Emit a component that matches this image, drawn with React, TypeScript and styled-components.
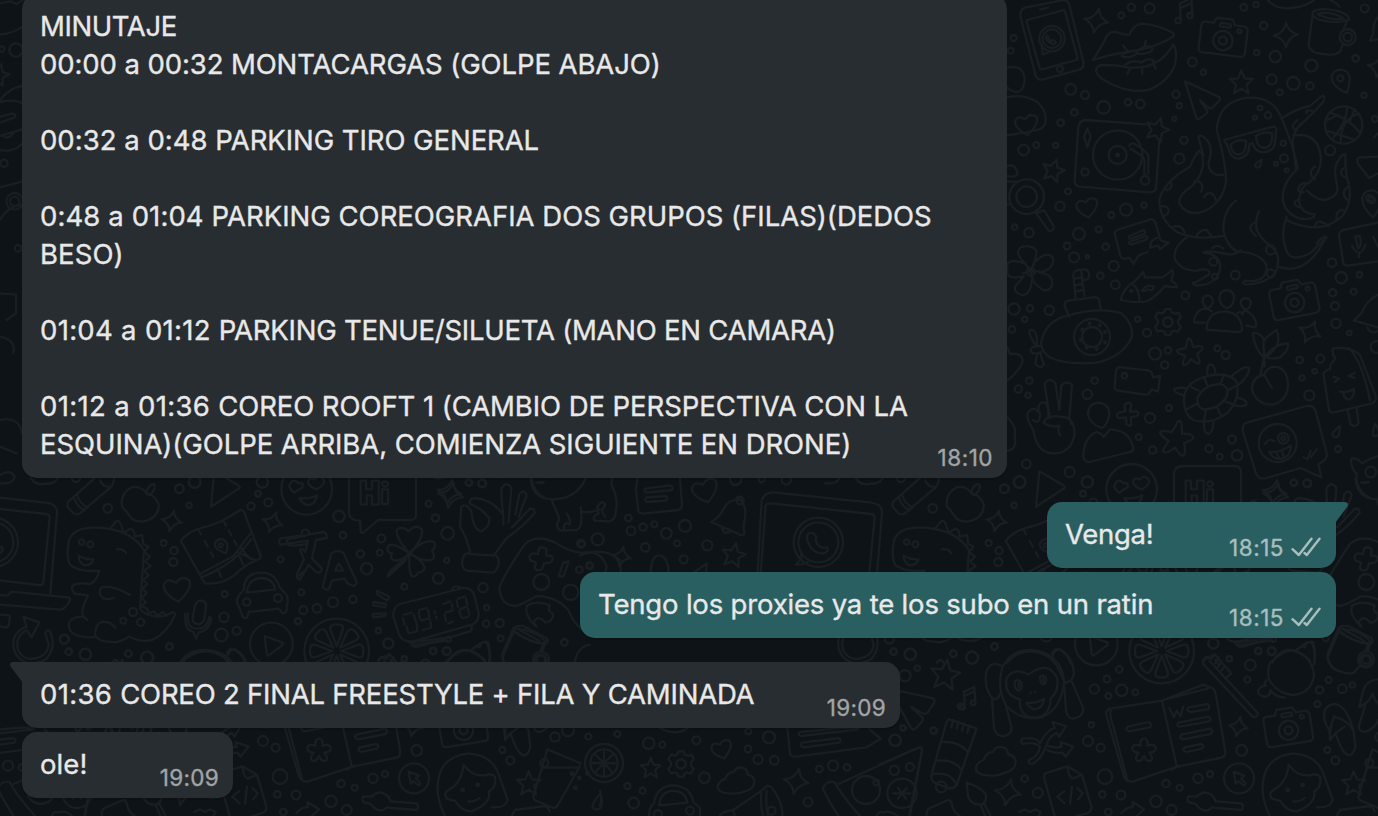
import styled, { createGlobalStyle, css } from 'styled-components'

type Run = { text: string, spacing?: number }
type Message = {
  id: number
  own?: boolean
  tail?: boolean
  width: number
  time: string
  timeSpacing: number
  lines: Run[][]
}

// Consecutive messages of the same author are grouped together
const groups: Message[][] = [
  [
    {
      id: 1,
      width: 985,
      time: '18:10',
      timeSpacing: 0.5,
      lines: [
        [{ text: 'MINUTAJE', spacing: -0.4 }],
        [{ text: '00:00 a 00:32 MONTACARGAS (GOLPE ABAJO)', spacing: -0.1 }],
        [],
        [{ text: '00:32 a 0:48 ', spacing: 0.02 }, { text: 'PARKING TIRO GENERAL', spacing: -0.07 }],
        [],
        [{ text: '0:48 a 01:04 ', spacing: 0.1 }, { text: 'PARKING COREOGRAFIA DOS GRUPOS (FILAS)(DEDOS', spacing: -0.01 }],
        [{ text: 'BESO)', spacing: 0.1 }],
        [],
        [{ text: '01:04 a 01:12 ', spacing: 0.3 }, { text: 'PARKING TENUE/SILUETA (MANO EN CAMARA)', spacing: -0.24 }],
        [],
        [{ text: '01:12 a 01:36 ', spacing: 0.33 }, { text: 'COREO ROOFT 1 (CAMBIO DE PERSPECTIVA CON LA', spacing: -0.07 }],
        [{ text: 'ESQUINA)(GOLPE ARRIBA, COMIENZA SIGUIENTE EN DRONE)', spacing: -0.06 }],
      ],
    },
  ],
  [
    { id: 2, own: true, tail: true, width: 289, time: '18:15', timeSpacing: 0.5, lines: [[{ text: 'Venga!', spacing: -0.3 }]] },
    { id: 3, own: true, width: 756, time: '18:15', timeSpacing: 0.5, lines: [[{ text: 'Tengo los proxies ya te los subo en un ratin', spacing: -0.18 }]] },
  ],
  [
    {
      id: 4,
      tail: true,
      width: 878,
      time: '19:09',
      timeSpacing: 0.3,
      lines: [[{ text: '01:36 ', spacing: 0.33 }, { text: 'COREO 2 FINAL FREESTYLE + FILA Y CAMINADA', spacing: -0.22 }]],
    },
    { id: 5, width: 211, time: '19:09', timeSpacing: 0.3, lines: [[{ text: 'ole!', spacing: 0.1 }]] },
  ],
]

const GlobalStyle = createGlobalStyle`
  body {
    margin: 0;
    background: #0e1317;
    font-family: Inter, "Open Sans", sans-serif;
  }
`

const Screen = styled.main`
  position: relative;
  width: 1378px;
  height: 816px;
  overflow: hidden;
  background: #0e1317;
`

const Wallpaper = styled.svg`
  position: absolute;
  inset: 0;
  fill: none;
  stroke: #191e22;
  stroke-width: 2.3px;
  stroke-linecap: round;
  stroke-linejoin: round;

  path, circle, ellipse {
    vector-effect: non-scaling-stroke;
  }
`

const Conversation = styled.div`
  position: relative;
  display: flex;
  flex-direction: column;
  gap: 24px;
  margin-top: -6px;
  padding: 0 42px 0 22px;
`

const Group = styled.section`
  display: flex;
  flex-direction: column;
  gap: 4px;
`

const Bubble = styled.div<{ $own?: boolean, $tail?: boolean, $width: number }>`
  position: relative;
  box-sizing: border-box;
  display: flex;
  align-items: flex-end;
  width: ${({ $width }) => $width}px;
  padding: 13px 14px 15px 18px;
  border-radius: 15px;
  background: #282d31;
  color: #e8e8e8;
  box-shadow: 0 2px 1px rgba(0, 0, 0, 0.14);

  ${({ $tail }) => $tail && css`border-top-left-radius: 0;`}

  ${({ $own, $tail }) => $own && css`
    align-self: flex-end;
    background: #2a5f61;
    border-radius: ${$tail ? '15px 0 15px 15px' : '15px'};
  `}
`

const Body = styled.div`
  flex: 1;
  min-width: 0;
`

const TextLine = styled.p`
  margin: 0;
  min-height: 38px;
  font-size: 27.5px;
  line-height: 38px;
  white-space: pre;
  -webkit-text-stroke: 0.35px currentColor;
`

const Spaced = styled.span<{ $spacing: number }>`
  letter-spacing: ${({ $spacing }) => $spacing}px;
`

const Meta = styled.div<{ $own?: boolean }>`
  display: flex;
  align-items: center;
  gap: 8px;
  margin-bottom: -10px;
  height: 30px;
  color: ${({ $own }) => $own ? '#a8bebf' : '#a2a5a7'};
`

const Time = styled.span<{ $spacing: number }>`
  font-size: 22.5px;
  line-height: 30px;
  letter-spacing: ${({ $spacing }) => $spacing}px;
  -webkit-text-stroke: 0.35px currentColor;
`

const TailShape = styled.svg<{ $own?: boolean }>`
  position: absolute;
  top: 0;
  left: -14px;
  fill: #282d31;

  ${({ $own }) => $own && css`
    left: auto;
    right: -14px;
    fill: #2a5f61;
    transform: scaleX(-1);
  `}
`

const Check = styled.svg`
  margin-bottom: 3px;
  margin-left: -1px;
  margin-right: 1px;
  fill: none;
  stroke: currentColor;
  stroke-width: 2.4px;
  stroke-linecap: round;
  stroke-linejoin: round;
`

/* ---------- wallpaper ---------- */

// Small drawings that come back all over the wallpaper, centred on 0,0
const stamps = {
  sparkle: ['M8 -36Q8 -8 36 6Q8 6 -8 36Q-8 8 -36 -6Q-6 -6 8 -36Z'],
  star: ['M0 -36L10 -12L35 -10L16 7L22 33L0 19L-22 33L-16 7L-35 -10L-10 -12Z'],
  starfish: ['M-2 -48Q4 -52 8 -42L14 -16Q40 -22 46 -12Q48 -6 24 8Q34 34 28 42Q20 46 2 24Q-18 46 -28 42Q-32 36 -18 10Q-46 -2 -46 -10Q-42 -16 -14 -16Z'],
  blossom: ['M-10 -12Q-14 -34 0 -34Q14 -34 10 -12Q30 -20 35 -8Q38 6 16 8Q30 26 20 32Q8 36 0 18Q-8 36 -20 32Q-30 26 -16 8Q-38 6 -35 -8Q-30 -20 -10 -12Z'],
  heart: ['M0 30Q-34 8 -32 -12Q-24 -32 -2 -16Q12 -34 30 -20Q38 0 0 30Z'],
  flake: ['M-4 -34Q8 -38 8 -24L6 -8L26 -12Q38 -8 28 2L10 8L14 28Q10 38 0 30L-4 10L-24 14Q-38 8 -28 -2L-8 -8L-12 -24Q-12 -32 -4 -34Z'],
  note: ['M-14 20V-28L22 -42V8M-14 -14L22 -28', 'M-31 22A8 8 0 1 0 -14 22A8 8 0 1 0 -31 22', 'M6 10A8 8 0 1 0 22 10A8 8 0 1 0 6 10'],
  gear: ['M-8 -38H8L11 -28L22 -24L32 -28L38 -14L30 -5V5L38 14L30 28L18 25L10 30L8 38H-8L-11 29L-20 25L-31 28L-38 14L-30 5V-5L-38 -14L-30 -28L-19 -25L-11 -29Z', 'M-14 0A14 14 0 1 0 14 0A14 14 0 1 0 -14 0'],
  pin: ['M20 36Q-24 18 -26 -10Q-24 -32 0 -34Q28 -32 28 -6Q28 12 20 36Z', 'M-9 -8A9 9 0 1 0 9 -8A9 9 0 1 0 -9 -8'],
  camera: [
    'M-60 -40H-34L-26 -56H22L30 -40H56Q70 -40 70 -26V38Q70 52 56 52H-58Q-70 52 -70 38V-26Q-70 -40 -60 -40Z',
    'M-29 10A29 29 0 1 0 29 10A29 29 0 1 0 -29 10', 'M-12 10A12 12 0 1 0 12 10A12 12 0 1 0 -12 10',
    'M-12 -42H16Q22 -36 16 -31H-12Q-18 -36 -12 -42Z', 'M40 -24A6 6 0 1 0 52 -24A6 6 0 1 0 40 -24',
  ],
  cloud: ['M-40 40Q-64 34 -58 14Q-50 0 -36 -4Q-30 -26 -8 -28Q0 -48 24 -42Q38 -36 36 -22Q60 -18 60 4Q58 26 30 34Q0 48 -40 40Z'],
  drop: ['M8 -22Q-16 6 -14 16Q-6 28 8 18Q14 6 8 -22Z'],
  play: ['M-64 0A64 64 0 1 0 64 0A64 64 0 1 0 -64 0', 'M-20 -24L34 -4Q36 2 30 6L-8 34Q-14 36 -14 28Z'],
  plane: ['M-50 -57L53 -10Q58 -4 52 2L32 22Q24 26 18 20L-5 0L17 32Q18 38 12 42L-8 56Q-14 58 -17 50Z'],
  cursor: ['M-45 0A45 45 0 1 0 45 0A45 45 0 1 0 -45 0', 'M-16 -20L16 -8L6 0L20 16L14 22L-2 8L-10 16Z'],
  citrus: [
    'M-97 0A97 97 0 1 0 97 0A97 97 0 1 0 -97 0',
    ...[0, 45, 90, 135, 180, 225, 270, 315].map(deg => {
      const at = (r: number, d: number) => `${(r * Math.sin((deg + d) * Math.PI / 180)).toFixed(1)} ${(-r * Math.cos((deg + d) * Math.PI / 180)).toFixed(1)}`
      return `M${at(14, 0)}L${at(66, -16)}Q${at(84, -16)} ${at(80, 0)}Q${at(84, 16)} ${at(66, 16)}Z`
    }),
  ],
}

type Stamp = [kind: keyof typeof stamps, x: number, y: number, scale?: number, rotate?: number]
type Patch = { x: number, y: number, dots: number[][], stamps: Stamp[], paths: string[] }

// Every patch has its own origin; its drawings are in thirds of a pixel
const patches: Patch[] = [
  {
    x: 1000,
    y: 0,
    dots: [
      [156, 116, 38], [156, 116, 28], [180, 207, 9], [394, 22, 11], [449, 25, 15], [364, 46, 9], [41, 114, 9], [32, 152, 9],
      [731, 22, 10], [768, 14, 8], [791, 77, 11], [770, 158, 8], [826, 170, 17], [577, 186, 13], [610, 217, 8], [1094, 25, 12],
      [1043, 111, 24], [1043, 111, 13], [934, 197, 18], [1067, 175, 10], [815, 238, 15], [880, 250, 19], [930, 258, 11], [839, 277, 9],
      [1092, 286, 8], [1031, 375, 56], [990, 451, 15], [1125, 357, 9], [212, 268, 16], [255, 285, 12], [311, 322, 19], [223, 337, 10],
      [384, 307, 10], [421, 312, 13], [528, 283, 11], [538, 317, 8], [523, 356, 6], [552, 421, 11], [538, 476, 15], [182, 368, 10],
      [71, 450, 16], [109, 435, 9], [167, 436, 8], [353, 465, 74], [353, 465, 27], [353, 465, 4], [435, 541, 13], [255, 516, 11],
      [80, 590, 52], [80, 590, 31], [204, 574, 9], [180, 619, 14], [378, 629, 18], [334, 645, 9], [432, 616, 8], [237, 702, 18],
      [296, 688, 9], [87, 698, 14], [44, 681, 8], [780, 324, 7], [765, 353, 6], [804, 346, 10], [850, 430, 8], [852, 475, 12],
      [828, 491, 6], [860, 511, 6], [1108, 595, 10],
    ],
    stamps: [
      ['sparkle', 289, 62], ['note', 555, 38, 1, -4], ['camera', 670, 112, 1, 7], ['sparkle', 858, 105, 1, -12], ['star', 724, 247],
      ['pin', 1021, 243], ['plane', 605, 301], ['heart', 80, 374, 1.05, -6], ['star', 160, 511, 0.95, 16], ['star', 472, 388, 1, 18],
      ['heart', 262, 623, 1, -8], ['drop', 776, 490, 0.6, 20], ['sparkle', 1136, 200, 0.9], ['pin', 1112, 608, 1.1, 20],
    ],
    paths: [
      'M75 23L185 1Q203 -2 208 14L250 185Q254 203 238 209L130 238Q112 243 106 224L62 52Q58 30 75 23Z',
      'M82 60L188 31Q193 30 195 34L232 172Q233 178 228 180L126 208Q121 209 119 204L80 66Q79 62 82 60Z',
      'M120 29L145 23', 'M126 136L128 164L150 154', 'M142 106Q132 114 146 126Q160 138 168 128L160 120L154 124L146 116Z',
      'M22 203Q72 192 74 240Q70 280 46 276Q26 270 22 262',
      // lips
      'M278 180Q300 150 322 105Q335 92 350 97Q375 105 388 104Q400 75 425 71Q475 75 518 98Q526 102 518 110Q480 135 425 148Q350 158 278 180Z',
      'M288 212Q290 195 310 195Q350 195 385 202Q440 208 480 180Q505 160 520 133Q533 150 525 195Q505 245 450 268Q400 282 340 255Q290 232 288 212Z',
      'M370 136Q376 148 384 152M437 122L434 138M364 168Q372 155 412 152Q412 165 395 169Q378 175 364 168ZM412 152Q425 139 450 139Q462 145 454 154Q440 162 416 162',
      'M376 194Q398 178 425 188Q440 172 462 182M390 205L382 222M427 208V222M459 188L467 206',
      // mug
      'M938 44L926 130Q925 155 960 161Q1010 170 1022 152L1028 134M1032 84L1040 66', 'M938 35Q965 20 1020 35Q1052 48 1046 60Q1010 72 960 60Q934 50 938 35Z', 'M952 42Q990 30 1032 56Q990 62 952 42Z',
      'M803 0Q830 30 875 24Q915 20 942 0', 'M990 0Q1010 8 1018 20', 'M1134 50Q1118 70 1120 100L1110 122L1134 118',
      'M20 292Q70 280 110 305Q140 330 137 362Q134 388 110 390Q70 400 20 406', 'M22 498Q46 490 53 520Q48 534 24 528M20 545H50M20 615L32 612',
      // turntable
      'M438 373L255 360Q240 362 235 380L224 540Q222 555 238 560L450 577Q465 577 468 565L478 420',
      'M388 438Q392 426 404 432Q436 450 445 466V522M392 446L420 464Q432 470 433 480V524', 'M262 386L272 410L262 442L252 410Z',
      'M108 640L132 630L162 680Q160 696 146 692Z',
      // octopus
      'M845 355Q820 292 750 292Q655 300 650 390Q680 500 678 545Q668 610 610 635Q560 650 538 610Q535 590 560 570Q600 545 608 500Q612 460 598 452Q585 465 570 500Q490 545 478 600Q478 660 530 695Q580 722 670 708',
      'M670 525Q630 530 625 490Q640 450 625 425Q605 400 595 410Q600 430 610 465', 'M845 355Q885 450 893 505Q850 545 848 590Q850 640 900 656Q945 660 944 643Q900 640 897 600Q900 560 930 545Q960 520 963 480Q960 410 905 405H880',
      'M845 355Q890 325 930 318L965 288Q978 285 970 305Q930 350 900 375Q880 395 878 430L888 505', 'M920 572Q950 600 975 600Q1015 590 1012 560Q1000 510 1010 490Q1025 460 1036 463Q1035 500 1040 530Q1065 600 1025 650Q980 690 920 680Q880 672 860 660',
      'M708 602Q670 630 670 690Q680 740 712 754Q790 760 800 800Q800 850 735 842Q720 850 740 854Q800 850 825 820Q846 770 820 745Q785 720 770 690Q765 655 777 632', 'M860 650Q840 700 858 748Q870 790 930 760L980 712Q970 704 950 730',
      'M560 712Q520 740 524 775Q540 812 590 812Q630 800 628 822Q600 842 578 850Q580 862 620 852Q665 835 660 790Q650 760 610 758Q620 748 690 764Q710 762 722 750', 'M835 800Q920 830 978 712',
      'M672 420L820 380Q832 380 828 395L825 430Q820 455 790 457Q765 455 758 430L748 432Q750 470 715 476Q690 475 684 440Z', 'M692 434Q712 416 738 422Q740 462 714 464Q694 460 692 434ZM768 408Q790 392 816 400Q820 440 792 444Q768 440 768 408Z',
      'M512 545Q520 568 498 570M484 618Q512 618 504 640L488 652M520 680Q545 672 554 698M590 708Q600 688 620 690L634 708M582 545Q615 540 604 575M612 590Q635 565 648 600M892 360Q870 380 884 388M920 340Q914 328 938 332M945 500Q920 520 945 538M925 550Q895 545 895 572Q905 580 912 576M897 598Q870 608 897 622M1042 562Q1020 580 1042 600M1030 630Q1005 630 1010 660M945 680Q950 650 985 678M766 668Q735 680 768 708M1030 505Q1014 520 1034 532M636 745Q650 730 670 745',
      'M990 338Q1040 350 1082 400M1042 320Q1040 370 1000 412M1076 340Q1020 360 1022 430M978 362L1012 346M1064 328L1050 362M980 392L1060 418',
      'M1134 470L1078 472Q1068 478 1074 492L1108 534L1134 520M1134 400L1122 412', 'M1134 668L1030 690Q1014 696 1018 712L1030 790Q1034 800 1050 796L1134 784M1066 710L1074 745Q1086 745 1080 708ZM1056 738Q1080 780 1096 734M1077 758V772M1120 710L1134 740',
      // note with a reply
      'M478 708L470 680Q465 655 452 658L350 690Q342 694 345 705L362 770Q366 780 390 774L400 792L416 766L444 756', 'M388 708L430 690Q440 696 432 702L392 716Q382 714 388 708ZM388 726L438 708Q446 712 440 718L394 734Q384 732 388 726ZM450 744Q450 715 478 712L482 722L506 728L480 748L474 736Q460 740 450 744Z',
    ],
  },
  {
    x: 1000,
    y: 240,
    dots: [
      [201, 18, 10], [317, 20, 10], [222, 52, 15], [262, 50, 5], [341, 78, 15], [301, 107, 10], [346, 134, 13], [92, 95, 12], [42, 207, 17],
      [90, 205, 10], [148, 211, 14], [74, 238, 8], [36, 268, 10], [413, 238, 8], [441, 278, 12], [276, 291, 54], [276, 291, 30], [503, 247, 14],
      [465, 341, 18], [504, 331, 10], [494, 375, 11], [556, 166, 12], [706, 105, 13], [996, 68, 13], [1024, 113, 17], [1078, 104, 8],
      [998, 158, 11], [1061, 155, 9], [1005, 198, 12], [1008, 250, 14], [1048, 279, 7], [652, 325, 9], [677, 345, 12], [899, 360, 10],
      [961, 356, 12], [906, 414, 8], [944, 394, 7], [928, 466, 15], [1130, 321, 18], [88, 422, 10], [55, 447, 11], [84, 466, 8], [284, 422, 10],
      [262, 463, 14], [373, 407, 8], [507, 504, 9], [450, 534, 15], [416, 591, 9], [458, 630, 11], [696, 598, 12], [627, 626, 11],
      [659, 650, 9], [711, 646, 16], [833, 609, 57], [850, 595, 16], [850, 595, 6], [1014, 627, 9], [79, 672, 13], [209, 696, 15], [262, 726, 17],
      [59, 726, 18], [13, 746, 13], [881, 728, 9], [921, 730, 11], [249, 761, 8], [640, 65, 12], [812, 100, 12], [812, 30, 14], [645, 110, 9],
      [243, 300, 3], [247, 269, 3], [269, 251, 3], [299, 256, 3], [315, 276, 3], [315, 307, 3], [290, 327, 3], [260, 323, 3], [394, 153, 3],
    ],
    stamps: [
      ['gear', 504, 246, 1.02], ['starfish', 570, 337, 0.85, -6], ['sparkle', 930, 276, 0.95, 14], ['camera', 882, 178, 1, -11], ['flake', 383, 523, 1, 6],
      ['starfish', 528, 596, 1.1, 10], ['drop', 1010, 574, 0.8, 10], ['drop', 1126, 570, 0.8, -20], ['sparkle', 824, 756, 1],
    ],
    paths: [
      // flower
      'M78 72Q40 40 62 22Q90 12 108 30Q112 50 100 72Q135 30 158 52Q168 84 120 98Q165 105 155 140Q135 170 96 118Q92 165 66 165Q36 156 48 136L72 108Q30 120 22 100V70Q40 56 78 72Z', 'M92 94L76 72M92 94L102 72M92 94H120M92 94L98 118M92 94L68 100',
      // submarine
      'M125 300Q140 240 205 226Q300 200 365 220Q400 250 396 290Q370 350 290 368Q200 376 145 350Q118 325 125 300Z', 'M208 230L194 198Q192 184 206 182L280 172Q298 170 298 184L302 210', 'M227 178L220 105Q220 92 235 90L255 88Q268 92 268 108Q264 124 246 118L254 170M222 116L246 112M225 136L248 132M228 154L250 150M242 92Q248 104 246 116',
      'M120 318Q84 320 94 336Q100 346 124 336M106 314Q84 280 88 272Q104 264 110 290L112 314M114 342Q104 360 108 374Q124 388 132 374Q124 356 122 342',
      // fish
      'M362 180Q370 145 404 124L430 96L434 112L488 112Q514 94 516 90Q522 92 514 122Q532 132 530 142L494 138Q470 170 440 184Q400 190 362 180Z', 'M398 132Q420 150 418 186M426 152Q440 130 462 140Q458 156 442 148Q432 156 426 152Z',
      // group of people
      'M620 268Q620 215 676 214Q726 220 726 270Q724 276 716 276L628 270Q620 272 620 268Z', 'M680 150Q704 152 702 178Q696 204 680 204Q664 200 658 178Q658 152 680 150Z', 'M622 166Q640 168 638 188Q632 204 622 204Q608 196 608 184Q608 168 622 166ZM736 174Q754 176 752 192Q746 210 736 208Q722 200 722 190Q722 176 736 174Z', 'M636 214Q610 196 590 220Q578 240 584 248H614M712 220Q720 210 728 224L732 210Q770 225 768 258L764 262L738 256',
      // cherries
      'M790 405Q755 410 756 450Q770 495 820 494Q865 480 864 430Q860 380 820 380Q800 384 792 404L816 444M782 402L792 350M794 380L790 300Q820 275 830 270Q840 300 830 318Q810 350 790 350Q765 330 758 280Q776 274 794 300M794 352Q820 312 864 310Q868 330 840 352Q820 360 794 350',
      // video camera
      'M362 382L446 391Q458 394 458 412L480 408L474 455L454 448Q450 464 436 464L354 452Q342 450 344 440L348 392Q352 380 362 382Z',
      // turtle
      'M552 480Q552 430 610 412Q680 390 710 425Q722 480 680 520Q630 556 580 540Q552 525 552 480Z', 'M592 475Q610 435 660 432Q690 440 680 470Q655 510 610 508Q590 500 592 475Z',
      'M622 402Q620 370 636 374Q646 380 646 402M694 410Q730 375 748 384Q745 410 714 436M552 466Q520 458 522 448Q540 438 562 446M612 548Q610 580 626 582Q640 575 640 545M705 496Q740 502 740 490Q736 476 714 474', 'M596 452L572 440M622 436L612 412M662 432L672 402M686 450L712 436M676 484L706 496M650 500L664 528M618 508L612 544M594 490L560 508',
      // ice lolly
      'M1000 325Q1050 318 1080 345L1128 470Q1130 490 1108 492L1000 518Q988 518 986 504L970 400Q985 385 990 388Q990 370 1000 364Q1010 350 1000 348Q996 330 1000 325Z', 'M1046 324Q1085 360 1110 480M1042 510L1052 552Q1064 566 1076 550L1070 505', 'M1000 410L1018 416L1004 426M1064 398L1046 408L1064 414M1020 454Q1040 462 1062 446Q1064 470 1048 478Q1034 480 1030 460',
      // peace hand
      'M150 534Q134 440 134 430Q148 412 166 428L178 510L184 436Q200 420 216 434L208 535Q228 560 222 590Q210 640 160 640Q110 640 100 570Q80 540 82 520Q100 495 116 516Q112 490 130 486Q146 490 146 530', 'M130 548Q140 524 180 530Q212 530 214 552M130 548Q150 562 178 558Q172 572 180 586M98 540Q120 556 120 520',
      // person
      'M296 488Q330 492 328 525Q320 560 304 564Q270 550 264 524Q264 490 296 488Z', 'M250 640Q255 590 290 576Q304 580 312 590L330 568Q390 570 400 625Q400 634 390 636L268 666Q248 668 250 640Z',
      // sticker balloon
      'M740 548L920 498Q938 494 946 510L980 640Q984 660 955 672L964 712L902 684L800 714Q775 720 768 700L728 572Q728 552 740 548Z', 'M796 612Q806 592 824 604M808 636Q845 638 872 616Q874 648 846 656Q820 660 808 636ZM830 640L838 654M846 634L852 654', 'M910 652L922 658L932 632M932 652L950 628',
      'M22 322L30 342Q60 336 68 360Q66 384 22 422M22 532Q50 560 44 580L46 610Q40 632 22 632', 'M1062 242L1084 220Q1100 180 1134 164M1062 242L1134 262M1102 262Q1110 284 1134 274',
      // arrow
      'M118 694L190 736Q200 744 188 748L108 800Z',
      'M1134 648Q1100 660 1086 670Q1070 652 1054 656Q1050 680 1070 702Q1066 750 1110 774', 'M1096 696A16 16 0 1 0 1128 696A16 16 0 1 0 1096 696M1084 728L1106 726',
    ],
  },
  {
    x: 0,
    y: 470,
    dots: [
      [584, 36, 17], [538, 56, 13], [567, 106, 8], [323, 115, 13], [787, 36, 17], [774, 71, 9], [753, 109, 11], [805, 97, 12], [491, 219, 9],
      [522, 242, 11], [520, 276, 12], [842, 268, 9], [674, 372, 9], [672, 442, 14], [664, 495, 19], [710, 482, 12], [509, 529, 10], [193, 507, 14],
      [206, 545, 10], [256, 553, 17], [385, 551, 10], [442, 563, 18], [399, 426, 12], [370, 452, 9], [422, 457, 11], [245, 216, 8], [271, 223, 9],
      [740, 396, 11], [834, 384, 12], [-20, 217, 74], [-20, 217, 60], [662, 226, 6], [893, 453, 9], [228, 24, 12],
    ],
    stamps: [['sparkle', 515, 153, 0.85], ['sparkle', 818, 157, 0.85, 8], ['heart', 532, 358, 1.25, -4], ['play', 814, 522]],
    paths: [
      // laptop
      'M-205 360L-190 90Q-180 66 -155 67L140 98Q174 104 171 130L151 370M-195 340L-178 106Q-176 100 -160 100L140 132Q150 134 149 142L130 338Q128 346 116 345L0 331L-195 310', 'M-220 360L22 377L35 365L205 382Q212 384 209 392Q196 418 180 419L0 404L-230 388Q-240 380 -220 360Z',
      'M-72 252Q-64 264 -88 284Q-60 284 -52 276M-50 190Q-30 184 -26 204Q-30 212 -24 220Q-12 240 6 230Q12 240 2 248Q-20 256 -40 236Q-62 205 -50 190Z',
      // pencil and apple
      'M205 95L300 10L342 22Q342 50 320 62L240 130Q232 136 220 130L204 112Q200 102 205 95ZM232 74Q236 100 264 112M222 82Q228 108 254 122M300 30Q310 52 326 50', 'M440 72Q425 46 395 52Q360 70 366 110Q380 125 386 134Q400 158 430 154Q478 145 476 102Q460 70 440 72Q440 45 462 42Q470 60 446 76',
      // dinosaur
      'M330 177Q220 160 206 215Q195 290 225 292Q240 305 298 302Q290 335 270 342Q215 335 216 355Q218 372 232 372L264 376Q240 425 250 440Q220 440 208 455Q200 490 240 498Q270 505 288 500Q300 518 350 516Q370 512 388 500Q430 520 460 508Q500 490 526 434Q526 424 514 428Q500 440 470 440Q430 435 420 415L432 240Q400 190 330 177Z',
      'M330 176L350 152Q362 150 370 188L392 176Q404 180 404 200L426 195L430 222L446 230L432 246L450 260L434 274L452 288L432 302L446 316L430 330L442 342L428 356L440 370L424 384L438 396L424 410L440 414L446 430L462 424L474 438L486 426L500 436', 'M350 238Q370 234 378 250M236 258Q258 270 280 268Q276 286 254 286Q236 278 236 258ZM390 375Q340 345 305 352Q290 370 310 385Q325 390 342 384M285 498Q285 455 315 455Q335 458 346 474M250 440L262 450',
      // map
      'M542 212Q570 180 610 172Q660 162 720 120Q728 118 732 126L782 258Q784 266 772 270Q740 280 700 318Q660 345 616 340Q606 330 600 315Z', 'M600 312L700 258L750 192M606 322Q680 290 716 254L754 208M710 244Q740 262 766 270M722 234Q736 250 752 268',
      'M596 180L603 193M614 213L624 231M632 246L640 261M670 152L678 167M686 181L694 196M702 211L710 226M652 296L664 322M718 258L730 284', 'M678 250Q644 240 644 222Q650 206 668 208Q690 216 678 250Z',
      // microphone
      'M584 410Q590 390 606 392Q620 396 618 410L612 452Q600 468 586 460Q576 454 578 444ZM564 430Q558 474 588 476Q622 478 628 440M556 430Q552 480 580 486L588 506L596 488Q630 480 634 444',
      // car
      'M732 360Q730 312 780 308Q826 306 838 350L858 372Q868 390 860 406V420Q850 440 840 420L836 416L746 426L742 442Q728 450 724 430L718 412Q702 394 720 372ZM740 368Q745 326 784 324Q820 326 826 358Z',
      'M0 434L26 436Q30 438 30 444L26 466Q24 474 16 472L0 468', 'M70 440L118 458L94 502L80 480Q44 500 54 540Q70 570 100 566Q142 560 146 524L136 490Q140 476 150 484Q170 530 140 566Q110 584 80 578Q36 560 40 510Q50 480 80 470Z',
      'M545 578Q600 520 670 560L690 580M684 556Q690 534 706 540Q730 556 736 580M336 578Q346 562 356 578', 'M860 215Q860 204 880 204L920 196M862 222Q870 232 920 222M892 320L910 305',
      'M92 24Q110 50 140 40Q160 44 172 26M0 15Q30 -5 44 20Q40 44 0 40M280 24L300 10',
    ],
  },
  {
    x: 290,
    y: 470,
    dots: [
      [50, 58, 76], [147, 139, 17], [537, 38, 10], [577, 40, 12], [416, 101, 9], [436, 144, 11], [159, 196, 10], [274, 205, 12], [269, 248, 9],
      [211, 252, 11], [230, 296, 17], [473, 190, 19], [470, 271, 8], [445, 325, 16], [343, 350, 9], [579, 353, 14], [34, 367, 9], [189, 388, 11],
      [129, 397, 15], [81, 415, 13], [40, 420, 12], [25, 454, 9], [265, 482, 8], [295, 520, 15], [430, 543, 10], [470, 543, 12], [590, 413, 8],
      [588, 461, 10], [629, 459, 12], [632, 505, 9], [754, 336, 24], [842, 367, 23], [868, 299, 10], [873, 221, 12], [823, 517, 10], [898, 286, 10],
      [343, 566, 8], [752, 572, 18],
    ],
    stamps: [['sparkle', 482, 76, 1.05], ['citrus', 140, 543]],
    paths: [
      'M206 -12H360Q378 -12 378 8V135Q378 150 360 150H264L220 188Q212 192 212 182L210 152Q180 152 177 130V10Q178 -12 206 -12Z',
      'M212 32H228V58H246V32H266V104H246V76H230V104H212ZM276 58H294V102H276ZM276 38Q286 30 294 40Q294 50 284 50Q276 48 276 38Z', 'M2 40Q10 24 26 40Q42 36 38 52L12 68Q-10 50 2 40ZM54 36Q56 20 74 28Q90 12 102 30Q104 46 80 58Q56 50 54 36ZM28 84Q60 88 82 76Q76 104 54 106Q34 100 28 84Z',
      // translate
      'M-28 205L35 196L36 184Q44 172 56 184V194L100 186Q112 188 110 204L78 210L66 265L96 296Q92 312 78 306L56 284L30 328Q20 328 20 314L42 268L30 240Q36 232 46 246L54 212L-28 224Q-38 214 -28 205Z', 'M98 350L124 250Q140 238 160 248L200 336Q200 346 190 348L172 340L164 326L126 332L118 356Q104 364 98 350ZM136 302L146 280L160 302Z',
      // clover
      'M358 250Q318 205 320 180Q336 165 356 184Q376 160 396 178Q400 208 358 250ZM358 250Q300 210 292 232Q290 248 306 250Q296 270 318 272Q340 270 358 250ZM362 248Q400 205 432 216Q440 232 426 242Q440 262 424 270Q390 275 362 250ZM358 254Q356 300 364 318Q376 324 384 308Q404 306 404 292Q396 270 362 252ZM354 256L296 308L294 320L350 268',
      // hand
      'M540 246Q530 200 510 170L514 110Q530 98 544 124Q550 180 574 184Q600 170 598 144Q570 110 540 102Q536 84 556 84Q610 90 640 136Q634 90 634 56Q648 30 664 54L656 156M676 134L688 72Q704 56 710 76L686 140M666 172L720 116Q734 114 734 128Q700 170 650 204L610 258M640 136V164', 'M530 250Q560 255 616 256Q628 260 626 284Q618 306 608 308L530 302Q518 296 516 280Q518 254 530 250Z',
      // clock
      'M330 402L520 354Q548 352 554 380L566 430Q566 458 545 464L370 514Q336 518 326 490L310 440Q308 410 330 402ZM486 358Q492 344 510 352M362 514L366 524Q370 532 384 530L540 484Q548 476 544 466',
      'M342 434L366 428M372 434L378 456M338 444L344 464M350 470L354 486M380 462L382 482M356 490L378 484M388 420L410 414M386 426L390 446M414 420L418 442M394 452L414 446M420 450L424 472M398 480L420 474M460 402L482 394M486 402L488 420M466 428L486 422M464 434L468 454M474 460L490 454M504 386L524 380M500 392L504 412M528 386L532 406M510 418L530 410M508 424L514 442M534 416L538 434M518 444L534 440M434 424L436 430M438 440L440 446',
      // rays
      'M262 362L298 380L292 392L260 372ZM250 396L288 402L286 412L250 406ZM248 432L288 430L286 438L250 442Z',
      // gamepad
      'M628 352Q650 300 705 222Q740 190 800 220Q850 255 900 246Q960 240 990 270Q1000 340 960 420Q930 480 895 484Q860 480 835 420Q800 380 740 378Q700 400 680 408Q630 408 628 352Z', 'M748 234Q760 228 770 238L768 256L784 258Q794 268 780 278L762 280L756 298Q742 306 734 294L738 278L722 272Q714 258 726 250L744 252ZM820 278L836 274L820 320L806 318Z',
      'M734 466Q700 430 712 406Q740 390 780 406Q770 424 790 432Q788 456 766 458Q750 440 740 446Q724 456 740 470Z', 'M668 480L640 545Q630 570 660 600M668 480Q670 466 700 468L770 505Q778 514 766 522Q720 520 668 480ZM684 478L748 512M764 526L756 546',
      'M722 24Q725 88 790 88Q860 86 888 24M784 88L806 140V154Q792 170 812 182L860 180Q876 172 874 140L872 112M830 130Q844 150 838 164Q820 150 822 180M745 38H760M874 124Q890 132 930 118', 'M472 578Q490 540 530 540Q550 540 584 570M544 540Q580 510 594 516Q602 540 598 578M854 580Q860 530 900 524',
      'M264 578L272 560L290 566L298 552L312 564L300 580',
    ],
  },
  {
    x: 580,
    y: 470,
    dots: [
      [145, 144, 10], [153, 182, 13], [189, 171, 11], [223, 163, 9], [259, 190, 16], [315, 168, 18], [196, 232, 13], [291, 220, 9], [311, 268, 12],
      [382, 226, 15], [53, 208, 18], [5, 222, 9], [30, 288, 9], [480, 94, 9], [467, 28, 17], [619, 30, 14], [545, 28, 9],
    ],
    stamps: [['sparkle', 124, 260, 0.8], ['star', 461, 255, 1, 12], ['heart', 376, 62, 1.2, -14]],
    paths: [
      'M172 24L168 60L175 125Q180 132 195 130L295 120Q306 116 306 106L300 24', 'M196 56L270 46Q282 50 276 60L200 68Q188 64 196 56ZM200 82L258 78Q266 84 258 92L202 96Q190 90 200 82Z', 'M394 156Q420 142 436 108Q450 86 480 90Q502 110 494 148Q488 170 494 190Q490 198 480 194ZM426 174Q428 190 444 188L454 182M468 90Q468 78 482 80Q494 84 490 100',
      'M95 24V46Q114 80 108 120Q108 150 88 154L44 152Q34 140 56 130Q44 110 66 96Q80 100 72 112Q60 124 76 140', 'M0 256Q60 230 80 290L76 306M212 306Q214 254 240 256Q264 262 266 306M344 306L380 280L378 306',
    ],
  },
  {
    x: 880,
    y: 630,
    dots: [
      [28, 28, 13], [91, 73, 17], [41, 65, 9], [220, 71, 10], [276, 83, 18], [112, 115, 8], [75, 137, 17], [343, 50, 10], [160, 301, 9], [69, 294, 8],
      [46, 331, 17], [718, 118, 10], [681, 147, 10], [643, 177, 14], [685, 198, 9], [725, 181, 17], [766, 187, 9], [634, 284, 8], [624, 333, 15],
      [662, 353, 12], [1000, 41, 15], [1048, 87, 8], [1111, 105, 16], [1102, 149, 9], [1134, 63, 9], [1175, 63, 11], [1458, 89, 24], [1458, 89, 12],
      [1346, 150, 9], [1387, 176, 13], [1319, 180, 11], [1417, 165, 8], [1312, 222, 9], [1085, 361, 16], [1342, 360, 9], [1366, 391, 12], [1468, 399, 12],
      [434, 446, 10], [473, 489, 15], [675, 440, 22], [667, 493, 10], [723, 495, 13], [685, 546, 10], [828, 514, 17], [875, 540, 15], [858, 461, 11],
      [899, 473, 9], [954, 445, 14], [990, 432, 9], [43, 421, 14], [90, 411, 12], [66, 490, 44], [1223, 480, 4], [1268, 465, 4], [184, 471, 16],
      [242, 229, 9], [1180, 28, 8],
    ],
    stamps: [
      ['star', 196, 134, 1.25, 8], ['note', 266, 210, 0.9, -4], ['sparkle', 1075, 290, 0.8], ['camera', 1224, 291, 1, -9], ['star', 1421, 460, 1],
      ['sparkle', 384, 487, 1.08], ['cloud', 347, 394], ['cursor', 1077, 445], ['blossom', 792, 360], ['plane', 100, 230, 1.2, -12],
    ],
    paths: [
      // monkey
      'M366 115Q390 60 448 60Q540 65 552 150Q548 235 485 262Q430 275 380 230Q350 180 366 115Z', 'M446 134Q400 110 380 145Q370 195 420 208Q415 250 450 262Q510 268 512 205Q540 180 530 140Q500 90 446 134Z', 'M366 108Q330 88 318 130Q312 180 340 208Q355 210 360 190M336 208L342 295Q350 320 372 318Q398 312 394 290L378 230M516 72Q520 54 540 58Q578 80 582 130Q578 155 555 158Q545 140 520 85M576 156L610 235Q610 262 580 266Q560 264 558 240L552 160',
      'M404 155Q414 145 424 158Q428 178 416 182Q402 178 404 155ZM480 140Q490 130 498 145Q500 160 490 164Q480 162 480 140ZM416 160V172M490 144V156M440 218Q470 222 492 206Q490 236 462 238Q444 232 440 218ZM452 188V190M465 186V188',
      // tube
      'M206 268L290 295L230 465Q220 480 198 472L160 456Q150 446 156 430L200 275ZM190 336Q240 335 262 364M172 392Q220 388 242 416M160 432Q210 425 226 458M220 270L214 292M236 275L230 296M252 280L246 302M268 286L262 308',
      // shuffle
      'M426 326Q470 320 480 340Q500 300 524 294L518 276L558 288L538 320L530 308Q505 320 500 345Q480 395 455 402Q440 398 450 388Q475 380 480 350Q465 334 428 342Q420 334 426 326ZM505 348Q530 356 545 350L542 336L580 350L556 380L548 368Q520 370 502 360',
      // open book
      'M690 236L846 212L970 164L1000 176Q1006 184 1008 196L1036 366Q1036 382 1020 384L892 410L760 454Q742 458 732 440L678 252Q680 238 690 236ZM846 212L890 408M692 240Q688 256 700 290L742 450M850 210L985 175M900 408Q880 412 876 420',
      'M744 290L806 276Q818 282 810 292L748 304Q732 300 744 290ZM868 234L882 262L890 242L902 258L910 230M926 232L982 222Q992 228 984 238L930 246Q916 240 926 232ZM896 278L984 260Q998 264 988 274L900 290Q886 288 896 278ZM904 314L990 296Q1002 300 992 312L910 328Q894 324 904 314ZM914 352L964 342Q974 348 966 356L920 366Q904 362 914 352Z',
      // toothbrush
      'M970 88L1004 74L1054 130L1036 146M970 88Q966 100 975 108L1118 260Q1132 266 1134 250L988 92M1006 90L1016 104M1022 100L1010 116M1032 112L1020 126',
      'M1170 98Q1220 55 1240 62Q1300 80 1302 140Q1290 190 1240 195Q1190 190 1168 150Q1160 120 1170 98ZM1248 62Q1265 42 1274 52L1280 38Q1294 30 1300 50Q1308 80 1302 104M1160 150Q1148 160 1158 166Q1136 170 1134 184Q1136 200 1160 200Q1175 190 1170 180Q1190 204 1214 202',
      'M1378 0L1342 84Q1348 116 1380 124Q1410 135 1424 126L1440 106M1384 -4Q1440 0 1476 38Q1440 46 1380 8M1464 44L1456 62',
      'M1332 250Q1340 220 1368 222Q1400 230 1420 300L1426 350Q1420 376 1406 376Q1390 370 1380 345L1366 310L1350 330L1348 300Q1330 275 1332 250ZM1362 260Q1350 290 1350 320M1362 260Q1400 270 1418 298M1366 310L1394 290',
      'M1494 148Q1460 150 1450 180L1438 230Q1446 222 1456 225L1436 290Q1440 310 1460 304Q1490 290 1494 270M1438 232Q1470 215 1478 190Q1484 210 1494 220',
      // girl
      'M1170 558Q1140 500 1150 450Q1160 380 1240 370Q1310 375 1330 430L1358 510Q1350 535 1310 532', 'M1226 404Q1220 460 1180 480Q1164 490 1175 505Q1190 512 1200 512Q1220 545 1250 544Q1310 520 1302 484Q1325 475 1320 440Q1310 428 1290 436Q1250 440 1226 404M1240 514Q1260 516 1274 504',
      'M924 500Q940 498 950 500Q970 480 990 492Q1004 500 1006 514L1084 520Q1094 530 1084 540L1010 534Q1000 534 996 532Q980 550 958 534L944 520Q916 520 924 500Z',
      'M1370 558L1380 540L1470 528Q1480 530 1484 545', 'M496 430L562 409L606 434L634 530Q636 545 620 550L590 558M496 430Q490 436 494 450L524 558M562 409Q566 440 578 446L606 434M552 484L532 500L554 520M592 474L608 490L594 508M576 470L570 522',
      'M724 550Q740 530 758 532V516L792 538L768 560', 'M260 458Q310 475 318 495Q320 520 302 524Q275 525 264 500ZM302 526L316 558M312 520L332 558M418 546L434 538L450 546L466 538L482 546L476 558M140 556Q138 540 150 534L204 510Q214 510 216 524Q222 550 240 558',
      'M0 402L118 352Q128 352 126 364L104 470L88 558M40 490H92M54 474L66 490L80 474M54 506L66 490L78 506M1064 38L1170 24M1070 46L1176 32',
    ],
  },
  {
    x: 600,
    y: 720,
    dots: [
      [52, 42, 9], [146, 70, 17], [187, 74, 9], [289, 61, 12], [243, 132, 14], [313, 173, 16], [82, 198, 9], [128, 212, 9], [101, 249, 16],
      [444, 87, 10], [507, 52, 18], [474, 118, 14], [523, 121, 13], [445, 34, 9], [885, 61, 17], [909, 24, 8], [1002, 32, 10], [658, 147, 10],
      [699, 137, 15], [741, 142, 10], [798, 210, 42], [829, 187, 9], [624, 246, 13], [174, 282, 12], [270, 272, 12], [12, 129, 57], [12, 129, 41],
      [515, 272, 12], [-135, 51, 14], [-96, 31, 18], [-35, 50, 9],
      [-84, 161, 4], [-38, 160, 4], [-62, 174, 4], [-74, 203, 4],
    ],
    stamps: [['star', 152, 144, 0.85], ['gear', 243, 132], ['heart', 366, 88, 0.95, -14], ['sparkle', 589, 184, 1.05], ['cloud', 408, 182, 0.92, 2], ['drop', -7, 244, 1.1]],
    paths: [
      'M562 24L570 100Q572 112 588 110L800 82L842 56L808 28M600 36L720 24Q780 20 776 28L604 48Q590 44 600 36ZM606 68L716 54Q726 60 718 68L612 82Q596 78 606 68Z',
      'M716 192L956 82Q966 80 966 92L930 288M668 206Q680 180 704 186Q720 220 780 288M668 206Q690 250 716 288', 'M360 288Q360 276 400 270L490 208Q500 192 515 202Q548 245 548 288M484 220Q480 260 490 288M500 212Q496 260 504 288M400 270L404 288',
      'M148 288Q145 262 162 250Q170 196 222 196Q272 200 280 246L300 264V288M178 256Q180 214 222 212Q258 216 262 248Z', 'M12 129L12 92M12 129L38 104M12 129L50 130M12 129L36 156M12 129V166M12 129L-14 156M12 129H-26M12 129L-14 104',
      'M-158 88L-58 130M-158 88L-200 230Q-198 240 -190 243L-140 264Q-132 264 -128 258L-60 138M-172 143L-64 142', 'M180 24Q230 50 262 24', 'M0 212Q8 240 0 256M830 288Q836 270 850 278Q870 268 892 288',
    ],
  },
  {
    x: 825,
    y: 0,
    dots: [[5, 147, 8], [48, 150, 20], [12, 490, 11], [44, 604, 25], [44, 604, 14], [54, 745, 10]],
    stamps: [['star', -4, 224, 0.9, 14]],
    paths: [
      'M0 104Q40 100 68 80M0 306Q50 296 68 312M0 300Q30 262 68 258M0 350L38 340Q50 342 44 352L0 368M0 408L66 388M10 408Q24 420 40 400M0 450Q40 458 68 430M0 562L68 544M0 660Q20 620 68 612M0 10L30 4L50 12L68 0',
      'M0 880L48 884V940L20 960M0 1010Q50 1020 40 1060M0 1260Q60 1250 66 1300M0 1340L50 1360',
    ],
  },
]

// The wallpaper repeats horizontally after this many pixels
const PATTERN_WIDTH = 825

function ChatWallpaper() {
  return (
    <Wallpaper width="1378" height="816" viewBox="0 0 1378 816" aria-hidden="true">
      {[-PATTERN_WIDTH, 0, PATTERN_WIDTH].map(offset => (
        <g key={offset} transform={`translate(${offset} 0)`}>
          {patches.map(patch => (
            <g key={`${patch.x}-${patch.y}`} transform={`translate(${patch.x} ${patch.y}) scale(${1 / 3})`}>
              {patch.dots.map(([cx, cy, r]) => <circle key={`${cx}-${cy}-${r}`} cx={cx} cy={cy} r={r} />)}
              {patch.paths.map(d => <path key={d} d={d} />)}
              {patch.stamps.map(([kind, x, y, scale = 1, rotate = 0]) => (
                <g key={`${x}-${y}`} transform={`translate(${x} ${y}) rotate(${rotate}) scale(${scale})`}>
                  {stamps[kind].map(d => <path key={d} d={d} />)}
                </g>
              ))}
            </g>
          ))}
        </g>
      ))}
    </Wallpaper>
  )
}

/* ---------- messages ---------- */

function MessageBubble({ message }: { message: Message }) {
  const { own, tail, width, time, timeSpacing, lines } = message

  return (
    <Bubble $own={own} $tail={tail} $width={width}>
      { tail && (
        <TailShape $own={own} width="16" height="26" viewBox="0 0 8 13">
          <path d="M1.533 2.568 8 11.193V0H2.812C1.042 0 .474 1.156 1.533 2.568Z" />
        </TailShape>
      )}
      <Body>
        { lines.map((runs, index) => (
          <TextLine key={index}>
            { runs.map(({ text, spacing = 0 }) => <Spaced key={text} $spacing={spacing}>{text}</Spaced>)}
          </TextLine>
        ))}
      </Body>
      <Meta $own={own}>
        <Time $spacing={timeSpacing}>{time}</Time>
        { own && (
          <Check width="30" height="20" viewBox="0 0 30 20">
            <path d="M1.5 12.2 7.8 18 20.5 1.8M13.5 16 15.8 18 28.5 1.8" />
          </Check>
        )}
      </Meta>
    </Bubble>
  )
}

export default function App() {
  return (
    <Screen>
      <GlobalStyle />
      <ChatWallpaper />
      <Conversation>
        { groups.map(messages => (
          <Group key={messages[0].id}>
            { messages.map(message => <MessageBubble key={message.id} message={message} />)}
          </Group>
        ))}
      </Conversation>
    </Screen>
  )
}
